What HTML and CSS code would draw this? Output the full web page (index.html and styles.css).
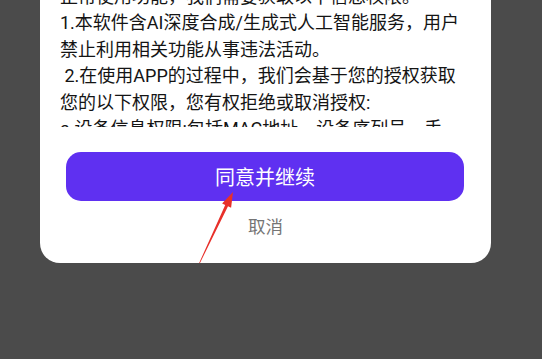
FILE: index.html
```html
<!DOCTYPE html>
<html lang="zh-CN">
<head>
    <meta charset="UTF-8">
    <meta name="viewport" content="width=device-width, initial-scale=1.0">
    <title>隐私授权</title>
    <link rel="stylesheet" href="styles.css">
</head>
<body>
<div class="dialog">
    <div class="terms">
        <p class="terms-text">
            正常使用功能，我们需要获取以下信息权限。<br>
            1.本软件含AI深度合成/生成式人工智能服务，用户<br>
            禁止利用相关功能从事违法活动。<br>
            &nbsp;2.在使用APP的过程中，我们会基于您的授权获取<br>
            您的以下权限，您有权拒绝或取消授权:<br>
            a.设备信息权限:包括MAC地址、设备序列号、手<br>
            机型号等信息，用于保障账号安全。
        </p>
    </div>
    <button type="button" class="agree-button">同意并继续</button>
    <button type="button" class="cancel-button">取消</button>

    <!-- annotation arrow drawn over the dialog -->
    <svg class="pointer" width="60" height="90" viewBox="180 185 60 90">
        <polygon points="233,192 231.1,207.7 228,206.2 199.5,264 198.7,264 225.2,205 222.1,203.5" fill="#e8302a"/>
    </svg>
</div>
</body>
</html>
```

FILE: styles.css
```css
body {
    margin: 0;
    padding: 0;
    background-color: #4b4b4b;
    font-family: Roboto, "Noto Sans CJK SC", sans-serif;
}
.dialog {
    position: relative;
    width: 451px;
    margin: -20px 0 0 40px;
    padding: 20px 0 24px;
    background-color: #fff;
    border-radius: 0 0 20px 20px;
    display: flex;
    flex-direction: column;
    align-items: center;
}
.terms {
    align-self: stretch;
    height: 127px;
    overflow: hidden;
    padding: 0 8px 0 20px;
}
.terms-text {
    margin: -16.5px 0 0;
    font-size: 18px;
    line-height: 26.5px;
    color: #141414;
    white-space: nowrap;
}
.agree-button {
    width: 398px;
    height: 49px;
    margin: 25px 0 0 -1px;
    border: none;
    border-radius: 15px;
    background-color: #5f30f1;
    color: #fff;
    font-family: inherit;
    font-size: 20px;
    cursor: pointer;
}
.cancel-button {
    margin-top: 14px;
    padding: 0;
    border: none;
    background: none;
    color: #757575;
    font-family: inherit;
    font-size: 17.5px;
    line-height: 24px;
    cursor: pointer;
}
.pointer {
    position: absolute;
    left: 140px;
    top: 205px;
}
```
